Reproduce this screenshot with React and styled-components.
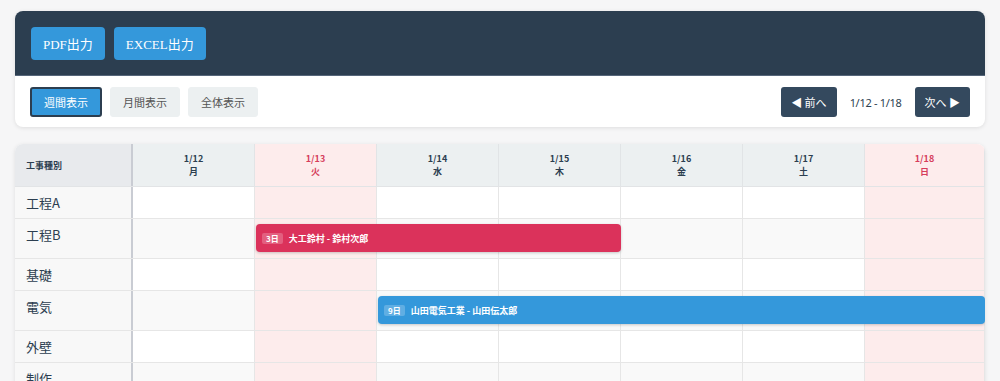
import styled, { createGlobalStyle } from "styled-components"

const GlobalStyle = createGlobalStyle`
body {
  margin: 0;
  background: #f6f6f7;
  font-family: "Noto Sans", "Noto Sans CJK JP", sans-serif;
}
`

const days = [
  { date: "1/12", wd: "月" },
  { date: "1/13", wd: "火", off: true },
  { date: "1/14", wd: "水" },
  { date: "1/15", wd: "木" },
  { date: "1/16", wd: "金" },
  { date: "1/17", wd: "土" },
  { date: "1/18", wd: "日", off: true },
]

const rows = [
  { name: "工程A" },
  { name: "工程B", bar: { start: 1, span: 3, days: "3日", label: "大工鈴村 - 鈴村次郎", color: "#db325b" } },
  { name: "基礎" },
  { name: "電気", bar: { start: 2, span: 5, days: "9日", label: "山田電気工業 - 山田伝太郎", color: "#3498db" } },
  { name: "外壁" },
  { name: "制作" },
]

const App = () => {
  return (
    <Page>
      <GlobalStyle />
      <ToolCard>
        <ExportBar>
          <ExportButton>PDF出力</ExportButton>
          <ExportButton>EXCEL出力</ExportButton>
        </ExportBar>
        <ViewBar>
          <ViewGroup>
            <ViewButton $active>週間表示</ViewButton>
            <ViewButton>月間表示</ViewButton>
            <ViewButton>全体表示</ViewButton>
          </ViewGroup>
          <NavGroup>
            <NavButton>◀ 前へ</NavButton>
            <RangeText>1/12 - 1/18</RangeText>
            <NavButton>次へ ▶</NavButton>
          </NavGroup>
        </ViewBar>
      </ToolCard>

      <ChartCard>
        <HeaderRow>
          <CornerCell>工事種別</CornerCell>
          {days.map((d) => (
            <DayHead key={d.date} $off={d.off}>
              <span>{d.date}</span>
              <span>{d.wd}</span>
            </DayHead>
          ))}
        </HeaderRow>
        {rows.map((r, i) => (
          <Row key={r.name}>
            <RowLabel>{r.name}</RowLabel>
            {days.map((d, j) => (
              <Cell key={d.date} $off={d.off} $alt={i % 2 === 1} style={{ gridColumn: j + 2 }} />
            ))}
            {r.bar && (
              <Bar $color={r.bar.color} style={{ gridColumn: `${r.bar.start + 2} / span ${r.bar.span}` }}>
                <DayBadge>{r.bar.days}</DayBadge>
                {r.bar.label}
              </Bar>
            )}
          </Row>
        ))}
      </ChartCard>
    </Page>
  )
}

const Page = styled.div`
padding: 11px 15px;
display: flex;
flex-direction: column;
gap: 17px;
`

const ToolCard = styled.div`
background: #fff;
border-radius: 8px;
overflow: hidden;
box-shadow: 0 1px 4px rgba(0, 0, 0, 0.1);
`

const ExportBar = styled.div`
background: #2c3e50;
padding: 16px 16px 15px;
display: flex;
gap: 9px;
border-bottom: 1px solid #56667a;
`

const ExportButton = styled.button`
background: #3498db;
color: #fff;
border: none;
border-radius: 4px;
height: 33px;
padding: 0 12px;
font-family: "Liberation Serif", "Noto Sans CJK JP", serif;
font-size: 13px;
`

const ViewBar = styled.div`
display: flex;
justify-content: space-between;
align-items: center;
padding: 11px 15px 10px 15px;
`

const ViewGroup = styled.div`
display: flex;
gap: 8px;
`

const ViewButton = styled.button`
background: ${(p) => (p.$active ? "#3498db" : "#ecf0f1")};
color: ${(p) => (p.$active ? "#fff" : "#555")};
border: ${(p) => (p.$active ? "2px solid #2c3e50" : "1px solid #ecf0f1")};
border-radius: 3px;
height: 30px;
padding: 0 12px;
font-family: "Liberation Serif", "Noto Sans CJK JP", serif;
font-size: 11px;
`

const NavGroup = styled.div`
display: flex;
align-items: center;
gap: 13px;
`

const NavButton = styled.button`
background: #34495e;
color: #fff;
border: none;
border-radius: 3px;
height: 30px;
padding: 0 10px;
font-family: "Noto Sans CJK JP", sans-serif;
font-size: 11px;
`

const RangeText = styled.span`
font-family: "Noto Sans", "Noto Sans CJK JP", sans-serif;
font-size: 11px;
letter-spacing: -0.3px;
color: #2c3e50;
`

const ChartCard = styled.div`
background: #fff;
border-radius: 8px 8px 0 0;
overflow: hidden;
box-shadow: 0 1px 4px rgba(0, 0, 0, 0.1);
`

const gridCols = "118px repeat(6, 122px) 1fr"

const HeaderRow = styled.div`
display: grid;
grid-template-columns: ${gridCols};
height: 42px;
border-bottom: 1px solid #e2e4e6;
`

const CornerCell = styled.div`
background: #e8eaed;
border-right: 2px solid #c9ccd3;
display: flex;
align-items: center;
padding-left: 11px;
font-size: 9px;
font-weight: 700;
color: #2c3e50;
font-family: "Noto Sans CJK JP", sans-serif;
`

const DayHead = styled.div`
background: ${(p) => (p.$off ? "#fdecec" : "#ecf0f1")};
color: ${(p) => (p.$off ? "#d63d5c" : "#2c3e50")};
border-right: 1px solid #e1e4e6;
display: flex;
flex-direction: column;
align-items: center;
justify-content: center;
font-size: 9px;
font-weight: 700;
line-height: 13px;
font-family: "Noto Sans CJK JP", sans-serif;
`

const Row = styled.div`
display: grid;
grid-template-columns: ${gridCols};
grid-template-rows: minmax(31px, auto);
border-bottom: 1px solid #e6e6e6;
`

const RowLabel = styled.div`
grid-column: 1;
grid-row: 1;
background: #f8f8f8;
border-right: 2px solid #c9ccd3;
padding: 6px 11px 0;
font-size: 13px;
line-height: 20px;
color: #2c3e50;
font-family: "Noto Sans CJK JP", sans-serif;
`

const Cell = styled.div`
grid-row: 1;
background: ${(p) => (p.$off ? "#fdecec" : p.$alt ? "#f9f9f9" : "#fff")};
border-right: 1px solid #e6e6e6;
`

const Bar = styled.div`
grid-row: 1;
z-index: 1;
margin: 5px 0 6px 1px;
height: 28px;
background: ${(p) => p.$color};
border-radius: 4px;
box-shadow: 0 1px 3px rgba(0, 0, 0, 0.2);
display: flex;
align-items: center;
gap: 6px;
padding-left: 6px;
color: #fff;
font-size: 9px;
font-weight: 700;
font-family: "Noto Sans CJK JP", sans-serif;
white-space: nowrap;
overflow: hidden;
`

const DayBadge = styled.span`
background: rgba(255, 255, 255, 0.22);
border-radius: 2px;
padding: 0 4px;
font-size: 8px;
line-height: 11px;
`

export default App
